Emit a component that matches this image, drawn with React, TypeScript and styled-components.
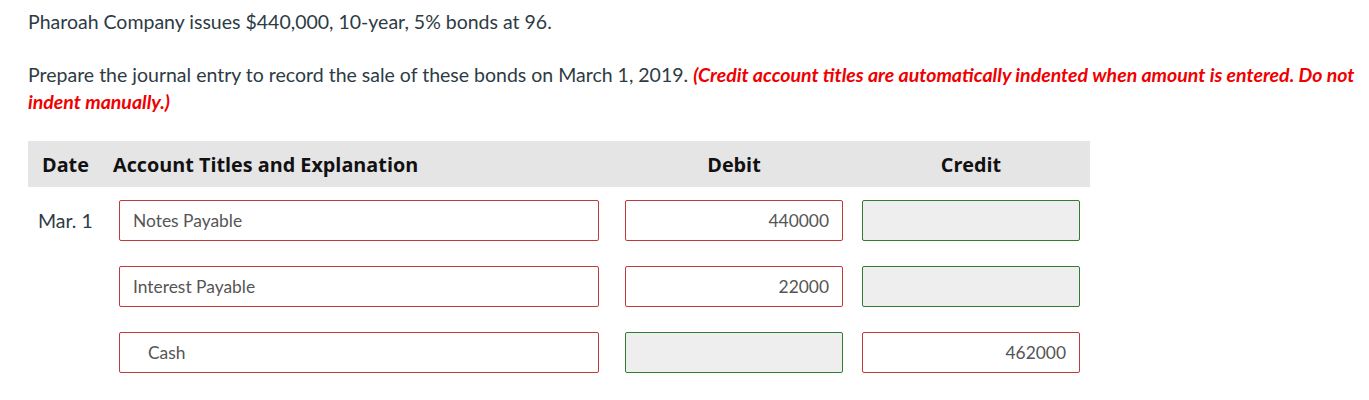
import React from "react";
import styled, { createGlobalStyle } from "styled-components";

const Global = createGlobalStyle`
  html, body { margin: 0; padding: 0; background: #fff; }
  body { font-family: Lato, "Open Sans", sans-serif; }
`;

const Page = styled.div`
  padding: 8px 9px 0 28px;
  color: #2d3b45;
`;

const Para = styled.p`
  margin: 0 0 26px 0;
  font-size: 19.5px;
  line-height: 27px;
`;

const Note = styled.span`
  color: #f00000;
  font-weight: 700;
  font-style: italic;
`;

const Table = styled.div`
  width: 1062px;
  display: grid;
  grid-template-columns: 85px 499px 241px 237px;
`;

const HeaderRow = styled.div`
  display: contents;
`;

const HeadCell = styled.div<{ $pad?: number }>`
  background: #e5e5e5;
  height: 46px;
  display: flex;
  align-items: center;
  padding-left: ${(p) => p.$pad ?? 0}px;
  font-family: "Open Sans", Lato, sans-serif;
  font-weight: 700;
  font-size: 19.8px;
  color: #111;
  white-space: nowrap;
`;

const HeadLabel = styled.span`
  width: 218px;
  text-align: center;
`;

const Row = styled.div`
  display: contents;
`;

const Cell = styled.div<{ $pad?: number; $top: number }>`
  display: flex;
  align-items: center;
  padding-left: ${(p) => p.$pad ?? 0}px;
  margin-top: ${(p) => p.$top}px;
`;

const DateText = styled.span`
  font-size: 19.5px;
  color: #2d3b45;
`;

const Field = styled.div<{ $ok?: boolean; $disabled?: boolean; $w: number; $right?: boolean; $indent?: boolean }>`
  box-sizing: border-box;
  width: ${(p) => p.$w}px;
  height: 41px;
  border: 1px solid ${(p) => (p.$ok ? "#2e7d32" : "#c0393b")};
  border-radius: 2px;
  background: ${(p) => (p.$disabled ? "#eeeeee" : "#fff")};
  display: flex;
  align-items: center;
  justify-content: ${(p) => (p.$right ? "flex-end" : "flex-start")};
  padding: ${(p) => (p.$right ? "0 13px 0 0" : p.$indent ? "0 0 0 28px" : "0 0 0 13px")};
  font-size: 17.4px;
  color: #555;
`;

type Entry = { date?: string; account: string; debit?: string; credit?: string };

const entries: Entry[] = [
  { date: "Mar. 1", account: "Notes Payable", debit: "440000" },
  { account: "Interest Payable", debit: "22000" },
  { account: "Cash", credit: "462000" },
];

export default function App() {
  return (
    <>
      <Global />
      <Page>
        <Para>Pharoah Company issues $440,000, 10-year, 5% bonds at 96.</Para>
        <Para>
          Prepare the journal entry to record the sale of these bonds on March 1, 2019.{" "}
          <Note>(Credit account titles are automatically indented when amount is entered. Do not indent manually.)</Note>
        </Para>
        <Table>
          <HeaderRow>
            <HeadCell $pad={14}>Date</HeadCell>
            <HeadCell>Account Titles and Explanation</HeadCell>
            <HeadCell $pad={13}>
              <HeadLabel>Debit</HeadLabel>
            </HeadCell>
            <HeadCell $pad={9}>
              <HeadLabel>Credit</HeadLabel>
            </HeadCell>
          </HeaderRow>
          {entries.map((e, i) => {
            const top = i === 0 ? 13 : 25;
            const isCredit = !!e.credit;
            return (
              <Row key={i}>
                <Cell $pad={10} $top={top}>
                  <DateText>{e.date ?? ""}</DateText>
                </Cell>
                <Cell $pad={6} $top={top}>
                  <Field $w={480} $indent={isCredit}>{e.account}</Field>
                </Cell>
                <Cell $pad={13} $top={top}>
                  <Field $w={218} $right $ok={!e.debit} $disabled={!e.debit}>
                    {e.debit ?? ""}
                  </Field>
                </Cell>
                <Cell $pad={9} $top={top}>
                  <Field $w={218} $right $ok={!e.credit} $disabled={!e.credit}>
                    {e.credit ?? ""}
                  </Field>
                </Cell>
              </Row>
            );
          })}
        </Table>
      </Page>
    </>
  );
}
